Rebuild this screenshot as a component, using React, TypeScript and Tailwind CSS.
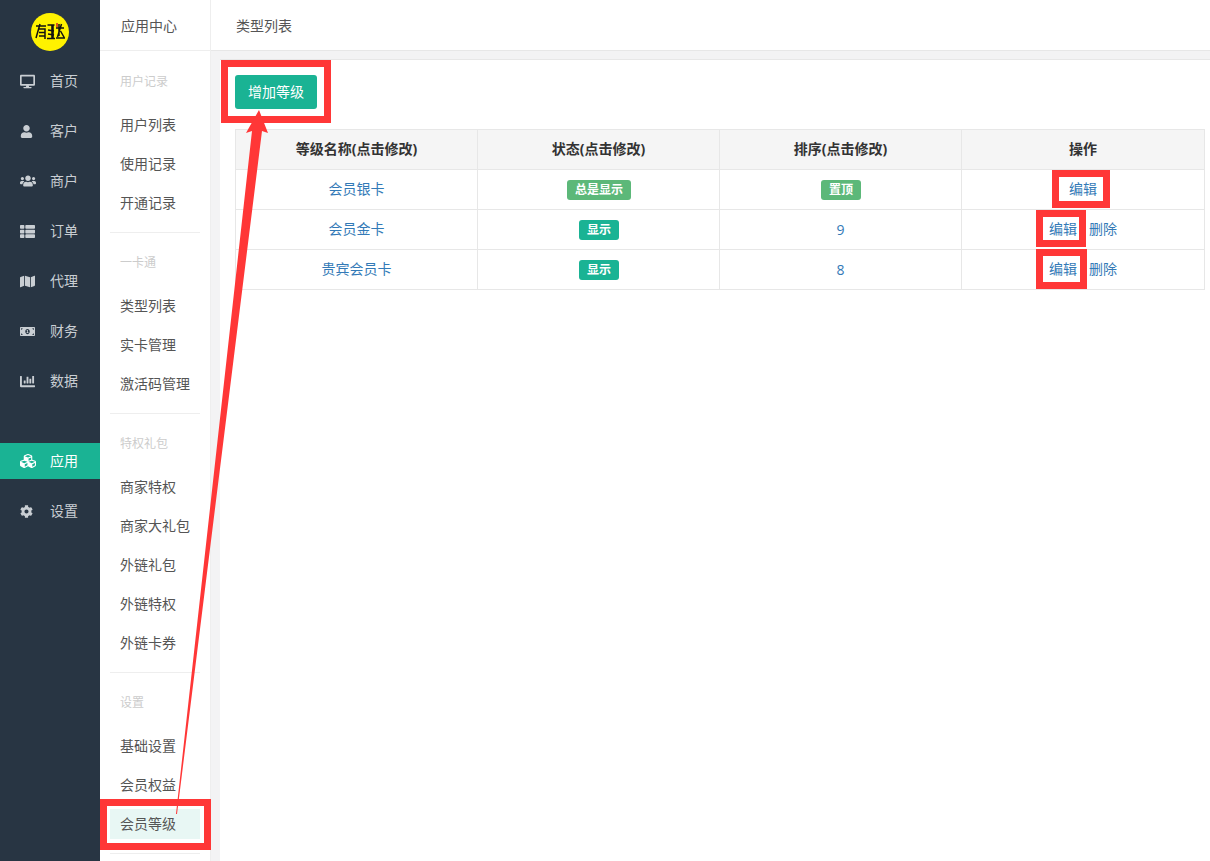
import { FaDesktop, FaUser, FaUsers, FaThList, FaMap, FaMoneyBillAlt, FaChartBar, FaCubes, FaCog } from "react-icons/fa";

const mainNav = [
  { label: "首页", Icon: FaDesktop, size: "text-[15px]" },
  { label: "客户", Icon: FaUser, size: "text-[13px]" },
  { label: "商户", Icon: FaUsers, size: "text-[16px]" },
  { label: "订单", Icon: FaThList, size: "text-[15px]" },
  { label: "代理", Icon: FaMap, size: "text-[15px]" },
  { label: "财务", Icon: FaMoneyBillAlt, size: "text-[15px]" },
  { label: "数据", Icon: FaChartBar, size: "text-[15px]" },
];

const sections = [
  { title: "用户记录", items: ["用户列表", "使用记录", "开通记录"] },
  { title: "一卡通", items: ["类型列表", "实卡管理", "激活码管理"] },
  { title: "特权礼包", items: ["商家特权", "商家大礼包", "外链礼包", "外链特权", "外链卡券"] },
  { title: "设置", items: ["基础设置", "会员权益", "会员等级"] },
];

const rows = [
  { name: "会员银卡", status: "总是显示", statusClass: "bg-[#5cb879]", sort: "置顶", remove: false },
  { name: "会员金卡", status: "显示", statusClass: "bg-[#1ab394]", sort: "9", remove: true },
  { name: "贵宾会员卡", status: "显示", statusClass: "bg-[#1ab394]", sort: "8", remove: true },
];

function NavItem({ label, Icon, size, active }: { label: string; Icon: typeof FaCog; size: string; active?: boolean }) {
  return (
    <div className={`flex h-9 items-center pl-5 mb-3.5 ${active ? "bg-[#1ab394] text-white" : "text-[#c9ced3]"}`}>
      <span className="flex w-[30px] items-center">
        <Icon className={size} />
      </span>
      <span className="text-sm">{label}</span>
    </div>
  );
}

function Logo() {
  return (
    <svg viewBox="0 0 38 38" className="h-[38px] w-[38px]">
      <circle cx="19" cy="19" r="19" fill="#fff200" />
      <g stroke="#111" strokeWidth="1.5" fill="none">
        <path d="M5 13h10M9 11l-4 14M8 16h6v10M8 19.5h6M8 23h6" />
        <path d="M16.5 12h7M17 17l6 1M17 21l6 1M16 25.5h8" />
        <path d="M21.5 12v13" strokeWidth="2.6" />
        <path d="M28 11v12M25 15h8M30.5 11l-4 13M29.5 18l4 7M25 25h9" />
      </g>
      <path d="M25 10h2v4h-2z" fill="#d9541e" />
    </svg>
  );
}

function Box({ className }: { className: string }) {
  return <div className={`pointer-events-none absolute border-[7px] border-[#ff3737] ${className}`} />;
}

export default function App() {
  return (
    <div
      className="relative flex h-[861px] w-[1210px] overflow-hidden bg-white text-sm text-[#676a6c]"
      style={{ fontFamily: '"Open Sans", "Noto Sans CJK SC", sans-serif' }}
    >
      <aside className="w-[100px] shrink-0 bg-[#283543]">
        <div className="flex h-[63px] justify-center pt-[13px]">
          <Logo />
        </div>
        {mainNav.map((n) => (
          <NavItem key={n.label} label={n.label} Icon={n.Icon} size={n.size} />
        ))}
        <div className="h-[30px]" />
        <NavItem label="应用" Icon={FaCubes} size="text-[16px]" active />
        <NavItem label="设置" Icon={FaCog} size="text-[13px]" />
      </aside>

      <nav className="w-[111px] shrink-0 border-r border-[#eeeeee] bg-white">
        <div className="flex h-[51px] items-center border-b border-[#eeeeee] pl-[21px] pt-0.5 text-[#555]">应用中心</div>
        <div className="px-2.5 pt-px">
          {sections.map((s) => (
            <div key={s.title} className="border-b border-[#eeeeee] pb-[5px]">
              <div className="h-[58px] pl-2.5 pt-5 text-xs leading-5 text-[#cccccc]">{s.title}</div>
              {s.items.map((item) => (
                <div
                  key={item}
                  className={`mb-[9px] flex h-[30px] items-center pl-2.5 text-[#555] ${item === "会员等级" ? "bg-[#e8f7f4]" : ""}`}
                >
                  {item}
                </div>
              ))}
            </div>
          ))}
        </div>
      </nav>

      <main className="flex min-w-0 flex-1 flex-col bg-[#f3f3f4]">
        <div className="flex h-[51px] shrink-0 items-center border-b border-[#e7e7e7] bg-white pl-[25px] pt-0.5 text-[#555]">类型列表</div>
        <div className="ml-[9px] mt-[8px] flex-1 border-t border-[#e7e7e7] bg-white pl-[15px] pr-[5px] pt-[15px]">
          <button className="h-[34px] w-[82px] rounded-[3px] bg-[#1ab394] text-sm font-normal text-white">增加等级</button>
          <table className="mt-5 w-[969px] table-fixed border-collapse leading-[18px]">
            <colgroup>
              <col className="w-[242px]" />
              <col className="w-[242px]" />
              <col className="w-[242px]" />
              <col className="w-[243px]" />
            </colgroup>
            <thead>
              <tr className="h-10 bg-[#f5f5f5] font-bold text-[#333]">
                {["等级名称(点击修改)", "状态(点击修改)", "排序(点击修改)", "操作"].map((h) => (
                  <th key={h} className="border border-[#e7e7e7] p-0 pb-0.5 text-center font-bold">
                    {h}
                  </th>
                ))}
              </tr>
            </thead>
            <tbody>
              {rows.map((r) => (
                <tr key={r.name} className="h-10 text-center">
                  <td className="border border-[#e7e7e7] p-0 pb-0.5 text-[#337ab7]">{r.name}</td>
                  <td className="border border-[#e7e7e7] p-0 pl-px">
                    <span className={`inline-flex h-5 items-center rounded-[3px] px-2 align-middle text-xs font-bold text-white ${r.statusClass}`}>
                      {r.status}
                    </span>
                  </td>
                  <td className={`border border-[#e7e7e7] p-0 text-[#337ab7] ${r.sort === "置顶" ? "pl-px" : ""}`}>
                    {r.sort === "置顶" ? (
                      <span className="inline-flex h-5 items-center rounded-[3px] bg-[#5cb879] px-2 align-middle text-xs font-bold text-white">置顶</span>
                    ) : (
                      r.sort
                    )}
                  </td>
                  <td className="border border-[#e7e7e7] p-0 pb-0.5 text-[#337ab7]">
                    <span className="inline-flex justify-center gap-3">
                      <span>编辑</span>
                      {r.remove && <span>删除</span>}
                    </span>
                  </td>
                </tr>
              ))}
            </tbody>
          </table>
        </div>
      </main>

      <Box className="left-[221px] top-[60px] h-[63px] w-[110px]" />
      <Box className="left-[100px] top-[799px] h-[51px] w-[111px]" />
      <Box className="left-[1052px] top-[170px] h-[38px] w-[58px]" />
      <Box className="left-[1036px] top-[210px] h-[37px] w-[50px]" />
      <Box className="left-[1036px] top-[249px] h-[40px] w-[51px]" />
      <svg className="pointer-events-none absolute left-0 top-0 h-[861px] w-[1210px]" viewBox="0 0 1210 861">
        <polygon points="259,110 268,133 262,131 177,814 176,814 252,131 246,133" fill="#ff3737" />
      </svg>
    </div>
  );
}
